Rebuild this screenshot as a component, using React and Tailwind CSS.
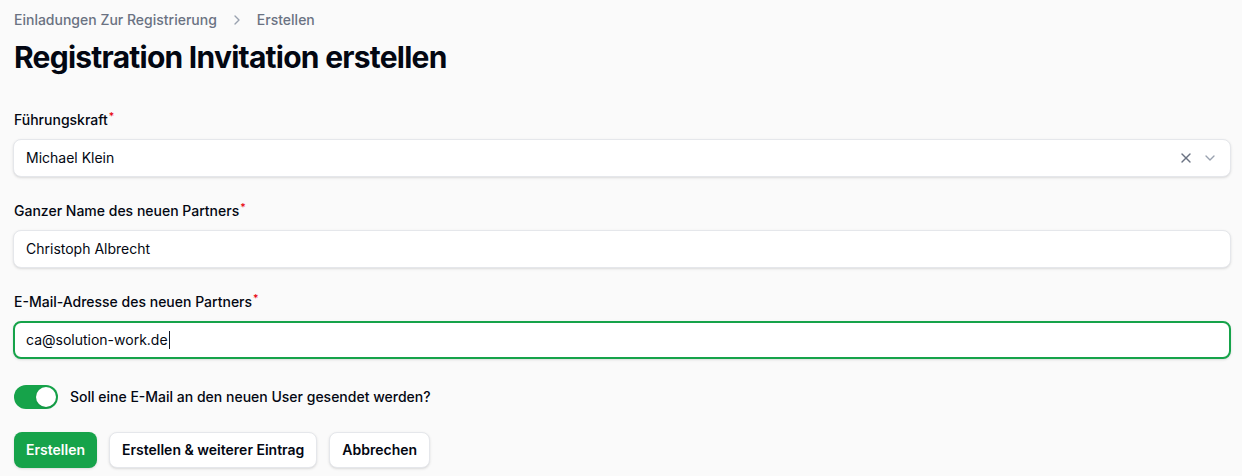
import React, { useState } from 'react'
import { ChevronRight, X, ChevronDown } from 'lucide-react'

function Label({ children }) {
  return (
    <label className="block text-sm leading-5 font-medium text-gray-950">
      {children}
      <sup className="ml-px font-medium text-red-600">*</sup>
    </label>
  )
}

export default function App() {
  const [notify, setNotify] = useState(true)

  return (
    <div className="min-h-screen bg-[#fafafa] pl-[14px] pr-[11px] pt-[10px] text-gray-950" style={{ fontFamily: 'Inter, "Noto Sans", sans-serif' }}>
      {/* Breadcrumbs */}
      <nav className="flex items-center gap-x-3 text-sm leading-5 font-medium text-gray-500">
        <span>Einladungen Zur Registrierung</span>
        <ChevronRight className="h-4 w-4 text-gray-400" />
        <span>Erstellen</span>
      </nav>

      <h1 className="mt-[9px] text-[30px] leading-9 font-bold tracking-tight">Registration Invitation erstellen</h1>

      <form className="mt-[35px] flex flex-col gap-y-6">
        <div className="flex flex-col gap-y-[9px]">
          <Label>Führungskraft</Label>
          <div className="flex h-[38px] -ml-px items-center rounded-lg border border-gray-200 bg-white pl-3 pr-3 shadow-sm">
            <span className="flex-1 text-sm">Michael Klein</span>
            <X className="h-4 w-4 text-gray-500" strokeWidth={2} />
            <ChevronDown className="ml-2 h-4 w-4 text-gray-400" strokeWidth={2} />
          </div>
        </div>

        <div className="flex flex-col gap-y-[9px]">
          <Label>Ganzer Name des neuen Partners</Label>
          <div className="flex h-[38px] -ml-px items-center rounded-lg border border-gray-200 bg-white px-3 shadow-sm">
            <span className="text-sm">Christoph Albrecht</span>
          </div>
        </div>

        <div className="flex flex-col gap-y-[9px]">
          <Label>E-Mail-Adresse des neuen Partners</Label>
          <div className="flex h-[38px] -ml-px items-center rounded-lg border-2 border-[#16a34a] bg-white px-[11px] shadow-sm">
            <span className="text-sm">ca@solution-work.de</span>
            <span className="ml-px h-[18px] w-px bg-gray-900" />
          </div>
        </div>

        <div className="flex items-center gap-x-3 pt-[2px]">
          <button
            type="button"
            onClick={() => setNotify(!notify)}
            className={`relative inline-flex h-6 w-11 shrink-0 items-center rounded-full ${notify ? 'bg-[#16a34a]' : 'bg-gray-200'}`}
          >
            <span className={`inline-block h-5 w-5 rounded-full bg-white shadow ${notify ? 'translate-x-[22px]' : 'translate-x-[2px]'}`} />
          </button>
          <span className="text-sm font-medium">Soll eine E-Mail an den neuen User gesendet werden?</span>
        </div>

        <div className="-mt-px flex items-center gap-x-3">
          <button type="button" className="h-9 rounded-lg bg-[#16a34a] px-3 text-sm font-semibold text-white shadow-sm">
            Erstellen
          </button>
          <button type="button" className="h-9 rounded-lg border border-gray-200 bg-white px-3 text-sm font-semibold shadow-sm">
            Erstellen &amp; weiterer Eintrag
          </button>
          <button type="button" className="h-9 rounded-lg border border-gray-200 bg-white px-3 text-sm font-semibold shadow-sm">
            Abbrechen
          </button>
        </div>
      </form>
    </div>
  )
}
